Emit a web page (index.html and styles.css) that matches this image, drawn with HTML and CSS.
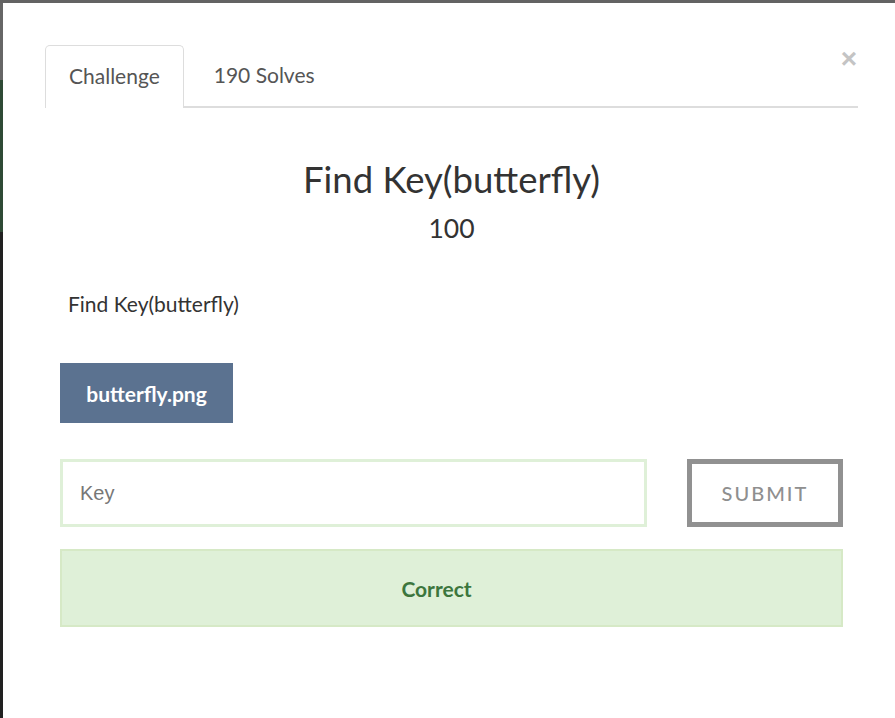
FILE: index.html
```html
<!DOCTYPE html>
<html>
<head>
<meta charset="utf-8">
<link rel="stylesheet" href="styles.css">
</head>
<body>
<div class="page">
  <div class="backdrop-top"></div>
  <div class="row">
    <div class="backdrop-left">
      <div class="seg seg-grey"></div>
      <div class="seg seg-green"></div>
      <div class="seg seg-dark"></div>
    </div>
    <div class="modal">
      <button class="close" aria-label="Close">&times;</button>
      <ul class="tabs">
        <li class="tab active">Challenge</li>
        <li class="tab">190 Solves</li>
      </ul>
      <div class="body">
        <h3 class="title">Find Key(butterfly)</h3>
        <h4 class="value">100</h4>
        <p class="desc">Find Key(butterfly)</p>
        <div class="files"><a class="file-btn">butterfly.png</a></div>
        <div class="submit-row">
          <input class="key-input" type="text" placeholder="Key">
          <button class="submit-btn">SUBMIT</button>
        </div>
        <div class="alert">Correct</div>
      </div>
    </div>
  </div>
</div>
</body>
</html>
```
FILE: styles.css
```css
html, body {
  margin: 0;
  padding: 0;
  height: 100%;
  background: #ffffff;
}
body {
  font-family: Lato, "Noto Sans", sans-serif;
  color: #333333;
}
.page {
  display: flex;
  flex-direction: column;
  height: 718px;
  overflow: hidden;
}
.backdrop-top {
  height: 3px;
  background: #636363;
  flex: none;
}
.row {
  display: flex;
  flex: 1;
}
.backdrop-left {
  width: 3px;
  display: flex;
  flex-direction: column;
  flex: none;
}
.seg-grey { height: 77px; background: #666666; }
.seg-green { height: 152px; background: #2e4a35; }
.seg-dark { flex: 1; background: #212121; }
.modal {
  position: relative;
  flex: 1;
  padding: 42px 37px 0 42px;
}
.close {
  position: absolute;
  top: 42px;
  right: 38px;
  border: 0;
  background: none;
  padding: 0;
  font-family: "Liberation Sans", Arial, sans-serif;
  font-size: 28px;
  line-height: 28px;
  color: #c4c4c4;
  font-weight: bold;
}
.tabs {
  list-style: none;
  margin: 0;
  padding: 0;
  display: flex;
  border-bottom: 2px solid #dddddd;
  height: 61px;
}
.tab {
  display: flex;
  align-items: center;
  padding: 0 23px 4px;
  font-size: 21px;
  color: #555555;
  border: 1px solid transparent;
  border-bottom: 0;
  margin-bottom: -2px;
  height: 62px;
  box-sizing: border-box;
}
.tab.active {
  border-color: #dddddd;
  border-radius: 5px 5px 0 0;
  background: #ffffff;
  height: 63px;
}
.tab + .tab { margin-left: 6px; }
.body {
  padding: 0 15px;
}
.title {
  margin: 49px 0 0;
  text-align: center;
  font-weight: 400;
  font-size: 36.5px;
  line-height: 44px;
}
.value {
  margin: 12px 0 0;
  text-align: center;
  font-weight: 400;
  font-size: 26.5px;
  line-height: 31px;
}
.desc {
  margin: 47px 0 0;
  padding-left: 8px;
  font-size: 21px;
  line-height: 25px;
}
.files {
  margin-top: 47px;
  display: flex;
}
.file-btn {
  display: flex;
  align-items: center;
  justify-content: center;
  width: 173px;
  height: 60px;
  background: #5b7290;
  color: #ffffff;
  font-weight: 700;
  font-size: 21px;
}
.submit-row {
  margin-top: 36px;
  display: flex;
  gap: 40px;
}
.key-input {
  flex: 1;
  height: 68px;
  box-sizing: border-box;
  border: 3px solid #dff0d8;
  padding: 0 17px;
  font-family: "Liberation Sans", Arial, sans-serif;
  font-size: 20px;
  color: #555;
  outline: none;
}
.key-input::placeholder { color: #777777; }
.submit-btn {
  width: 156px;
  height: 68px;
  box-sizing: border-box;
  border: 5px solid #919191;
  background: #ffffff;
  color: #8f8f8f;
  font-family: Lato, sans-serif;
  font-size: 20px;
  letter-spacing: 2px;
  font-weight: 500;
}
.alert {
  margin-top: 22px;
  height: 78px;
  box-sizing: border-box;
  padding-right: 30px;
  background: #dff0d8;
  border: 2px solid #d6e9c6;
  color: #3c763d;
  font-weight: 700;
  font-size: 21px;
  display: flex;
  align-items: center;
  justify-content: center;
}
```
